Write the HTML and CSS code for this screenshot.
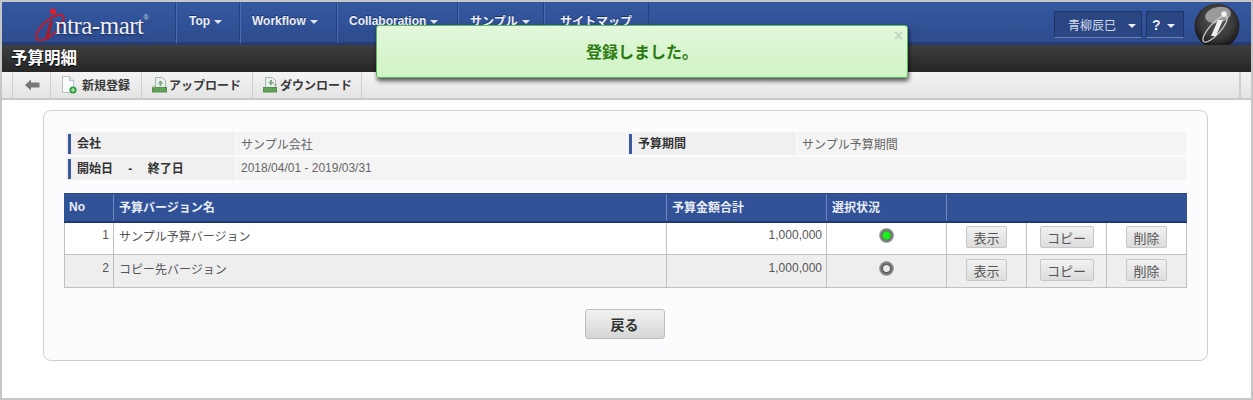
FILE: index.html
```html
<!DOCTYPE html>
<html lang="ja">
<head>
<meta charset="utf-8">
<title>予算明細</title>
<link rel="stylesheet" href="styles.css">
</head>
<body>
<div class="frame">
  <header class="topbar">
    <div class="logo">
      <svg class="logo-mark" width="34" height="36" viewBox="0 0 34 36">
        <ellipse cx="17" cy="21.500" rx="7" ry="17.500" transform="rotate(48 17 21.500)" fill="none" stroke="#b81e2c" stroke-width="2"/>
        <path d="M18.500 15 L14 31 Q13.500 33 16 31.500" fill="none" stroke="#a81c28" stroke-width="3"/>
        <circle cx="20" cy="5.500" r="3" fill="#e3202e"/>
      </svg>
      <span class="logo-text">ntra-mart</span><span class="logo-reg">®</span>
    </div>
    <nav class="nav">
      <a class="nav-item nav-top">Top <i class="caret"></i></a>
      <a class="nav-item nav-wf">Workflow <i class="caret"></i></a>
      <a class="nav-item nav-co">Collaboration <i class="caret"></i></a>
      <a class="nav-item nav-sa">サンプル <i class="caret"></i></a>
      <a class="nav-item nav-si">サイトマップ</a>
    </nav>
    <div class="user">
      <a class="user-btn user-name">青柳辰巳 <i class="caret caret-light"></i></a>
      <a class="user-btn user-help"><b>?</b> <i class="caret caret-light"></i></a>
      <svg class="orb" width="46" height="46" viewBox="0 0 46 46">
        <defs>
          <radialGradient id="orbg" cx="50%" cy="40%" r="62%">
            <stop offset="0" stop-color="#555"/>
            <stop offset="0.6" stop-color="#3a3a3a"/>
            <stop offset="1" stop-color="#0e0e12"/>
          </radialGradient>
        </defs>
        <circle cx="23" cy="23" r="22.500" fill="url(#orbg)"/>
        <ellipse cx="24" cy="12" rx="13" ry="8" transform="rotate(-12 24 12)" fill="#9a9a9a"/>
        <ellipse cx="21" cy="26" rx="5.500" ry="17" transform="rotate(42 21 26)" fill="none" stroke="#cfcfcf" stroke-width="1.300"/>
        <path d="M24 17 L29 17 L22 33 L17 33 Z" fill="#f0f0f0"/>
        <circle cx="30" cy="11" r="2.800" fill="#f0f0f0"/>
      </svg>
    </div>
  </header>
  <div class="titlebar"><h1 class="title">予算明細</h1></div>
  <div class="toolbar">
    <a class="tool tool-back">
      <svg width="15" height="12" viewBox="0 0 15 12"><path d="M0 6 L6 0.500 V3.500 H14.500 V8.500 H6 V11.500 Z" fill="#777"/></svg>
    </a>
    <a class="tool tool-new">
      <svg width="16" height="18" viewBox="0 0 16 18"><path d="M1.500 .5H8.500L12.500 4.500V16.500H1.500Z" fill="#fafcfc" stroke="#b4c0c4"/><path d="M8.500 .5V4.500H12.500" fill="#dde6e8" stroke="#b4c0c4"/><circle cx="12" cy="14" r="3.600" fill="#2f9e3f"/><path d="M12 12V16M10 14H14" stroke="#d8f5d8"/></svg>
      <span class="tool-label tool-label-gap">新規登録</span>
    </a>
    <a class="tool tool-up">
      <svg width="16" height="16" viewBox="0 0 16 16"><path d="M3.500 .5H10.500L13.500 3.500V12H3.500Z" fill="#e8efec" stroke="#a8b4b0"/><path d="M5.500 6.500L8.500 3.500L11.500 6.500H9.500V9H7.500V6.500Z" fill="#7fa98a"/><rect x="0.500" y="10.500" width="14" height="4.500" fill="#5da552" stroke="#5a8a50"/><rect x="0.500" y="8.500" width="2.500" height="2" fill="#b8c8b8"/></svg>
      <span class="tool-label">アップロード</span>
    </a>
    <a class="tool tool-down">
      <svg width="16" height="16" viewBox="0 0 16 16"><path d="M2.500 .5H9.500L12.500 3.500V12H2.500Z" fill="#e8efec" stroke="#a8b4b0"/><path d="M5 5H7V3H9V5H11L8 8.500Z" fill="#7fa98a"/><rect x="0.500" y="10.500" width="13" height="4.500" fill="#5da552" stroke="#5a8a50"/><path d="M11 7L14 7L12.500 9Z" fill="#9a9a9a"/></svg>
      <span class="tool-label">ダウンロード</span>
    </a>
    <span class="tool-end"></span>
  </div>
  <main class="content">
    <section class="card">
      <table class="info">
        <colgroup><col class="i1"><col class="i2"><col class="i3"><col></colgroup>
        <tr>
          <th><span class="info-label">会社</span></th>
          <td>サンプル会社</td>
          <th><span class="info-label">予算期間</span></th>
          <td>サンプル予算期間</td>
        </tr>
        <tr>
          <th><span class="info-label">開始日　&nbsp;-　&nbsp;終了日</span></th>
          <td colspan="3">2018/04/01 - 2019/03/31</td>
        </tr>
      </table>
      <table class="data">
        <colgroup><col class="c1"><col class="c2"><col class="c3"><col class="c4"><col class="c5"><col class="c6"><col></colgroup>
        <thead>
          <tr>
            <th>No</th>
            <th>予算バージョン名</th>
            <th>予算金額合計</th>
            <th>選択状況</th>
            <th colspan="3"></th>
          </tr>
        </thead>
        <tbody>
          <tr>
            <td class="num">1</td>
            <td>サンプル予算バージョン</td>
            <td class="num">1,000,000</td>
            <td class="ctr"><span class="radio radio-on"></span></td>
            <td class="ctr"><button class="mini">表示</button></td>
            <td class="ctr"><button class="mini">コピー</button></td>
            <td class="ctr"><button class="mini">削除</button></td>
          </tr>
          <tr class="alt">
            <td class="num">2</td>
            <td>コピー先バージョン</td>
            <td class="num">1,000,000</td>
            <td class="ctr"><span class="radio"></span></td>
            <td class="ctr"><button class="mini">表示</button></td>
            <td class="ctr"><button class="mini">コピー</button></td>
            <td class="ctr"><button class="mini">削除</button></td>
          </tr>
        </tbody>
      </table>
      <div class="actions"><button class="back-btn">戻る</button></div>
    </section>
  </main>
  <div class="toast">
    <span class="toast-close">×</span>
    <p class="toast-text">登録しました。</p>
  </div>
</div>
</body>
</html>
```
FILE: styles.css
```css
* { box-sizing: border-box; }
html, body { margin: 0; padding: 0; }
body {
  font-family: "Liberation Sans", "Noto Sans CJK JP", sans-serif;
  font-size: 12px;
  color: #555;
  background: #fff;
}
.frame {
  position: relative;
  width: 1253px;
  height: 400px;
  border: 2px solid #c6c6c6;
  overflow: hidden;
  display: flex;
  flex-direction: column;
}
.topbar {
  height: 43px;
  flex: none;
  display: flex;
  align-items: stretch;
  background: linear-gradient(#34589f, #2e4c8f 93%, #263f78 93%, #233a6e);
}
.logo {
  width: 173px;
  flex: none;
  display: flex;
  align-items: center;
  padding-left: 31px;
}
.logo-mark { flex: none; margin-right: -12px; }
.logo-text {
  font-family: "Liberation Serif", serif;
  font-size: 25px;
  color: #eef0f6;
  letter-spacing: -0.5px;
  text-shadow: 0 1px 2px #16264f;
  margin-top: 5px;
}
.logo-reg { font-size: 7px; color: #cdd; align-self: flex-start; margin-top: 12px; }
.nav { display: flex; align-items: stretch; height: 41px; }
.nav-item {
  display: flex;
  align-items: center;
  gap: 4px;
  padding: 0 0 4px 12px;
  color: #eaeef8;
  font-weight: bold;
  font-size: 12px;
  border-left: 1px solid #24407e;
  box-shadow: inset 1px 0 0 #4a6cb0;
  text-shadow: 0 -1px 0 #1c2f60;
}
.nav-top { width: 64px; padding-left: 13px; }
.nav-wf { width: 97px; }
.nav-co { width: 121px; }
.nav-sa { width: 86px; }
.nav-si { width: 106px; padding-left: 16px; border-right: 1px solid #24407e; }
.caret {
  display: inline-block;
  width: 0;
  height: 0;
  margin-top: 3px;
  border-left: 4px solid transparent;
  border-right: 4px solid transparent;
  border-top: 4px solid #dfe4f0;
}
.caret-light { border-top-color: #eef; }
.user {
  margin-left: auto;
  display: flex;
  align-items: flex-start;
  gap: 4px;
  padding: 9px 11px 0 0;
}
.user-btn {
  display: flex;
  align-items: center;
  height: 27px;
  background: #2a4683;
  border: 1px solid #1e3468;
  border-bottom: 1px solid #6d86ba;
  color: #d4dcec;
  font-size: 12px;
}
.user-name { width: 88px; padding-left: 13px; gap: 12px; }
.user-help { width: 38px; padding-left: 5px; gap: 6px; }
.user-help b { color: #eef; font-size: 14px; }
.orb { margin: -8px 0 0 6px; flex: none; }
.titlebar {
  height: 27px;
  flex: none;
  display: flex;
  align-items: center;
  padding: 0 0 4px 9px;
  background: linear-gradient(#3e3e3e, #262626);
}
.title {
  margin: 0;
  color: #fff;
  font-size: 16.500px;
  font-weight: bold;
  text-shadow: 0 1px 1px #000;
}
.toolbar {
  height: 28px;
  flex: none;
  display: flex;
  align-items: stretch;
  padding: 0 10px 0 10px;
  background: linear-gradient(#f4f4f4, #e4e4e4);
  border-bottom: 2px solid #c8c8c8;
}
.tool {
  display: flex;
  align-items: center;
  padding: 0 0 1px 10px;
  color: #3a3a3a;
  font-size: 12px;
  font-weight: bold;
  border-left: 1px solid #cfcfcf;
}
.tool-back { width: 38px; padding-left: 12px; }
.tool-new { width: 91px; }
.tool-up { width: 111px; }
.tool-down { width: 110px; border-right: 1px solid #cfcfcf; }
.tool-label { margin-left: 1px; }
.tool-label-gap { margin-left: 5px; }
.tool-end { margin-left: auto; width: 2px; border-left: 1px solid #cfcfcf; border-right: 1px solid #cfcfcf; }
.content {
  flex: 1;
  padding: 10px 43px 0 41px;
}
.card {
  height: 251px;
  background: #fcfcff;
  border: 1px solid #cfcfcf;
  border-radius: 8px;
  padding: 19px 20px 0;
}
.info {
  width: 1122px;
  margin-left: 1px;
  border-collapse: separate;
  border-spacing: 1px 2px;
  table-layout: fixed;
  font-size: 12px;
}
.i1 { width: 169px; }
.i2 { width: 390px; }
.i3 { width: 169px; }
.info th, .info td { height: 23px; padding: 0 0 1px; background: #f4f4f4; text-align: left; font-weight: normal; }
.info th { background: #f0f0f0; padding: 0 0 0 2px; }
.info td { padding-left: 5px; color: #666; }
.info-label {
  display: block;
  border-left: 3px solid #3a5aa0;
  padding: 0 0 0 6px;
  line-height: 20px;
  color: #333;
  font-weight: bold;
  font-size: 12px;
}
.data {
  width: 1123px;
  margin-top: 11px;
  border-collapse: collapse;
  table-layout: fixed;
  font-size: 12px;
}
.c1 { width: 49px; }
.c2 { width: 553px; }
.c3 { width: 160px; }
.c4 { width: 120px; }
.c5 { width: 80px; }
.c6 { width: 80px; }
.data th {
  height: 28px;
  padding: 0 5px 1px;
  background: #325298;
  color: #e8edf7;
  text-align: left;
  font-size: 12px;
  border-left: 1px solid #6e88bb;
  border-top: 1px solid #2a4683;
  border-bottom: 2px solid #223a72;
}
.data th:first-child { border-left-color: #325298; padding-left: 4px; }
.data td {
  height: 33px;
  padding: 0 4px 6px 5px;
  border: 1px solid #c0c0c0;
  background: #fff;
  color: #555;
}
.data .alt td { background: #eee; }
.data td.num { text-align: right; }
.data td.ctr { text-align: center; padding: 0; }
.radio {
  display: inline-block;
  width: 15px;
  height: 15px;
  margin-bottom: 6px;
  vertical-align: middle;
  border-radius: 50%;
  background: radial-gradient(circle, #e8e8e8 0 3px, #5c5c5c 4px, #808080 6px, #b4b4b4 7.500px);
}
.radio-on { background: radial-gradient(circle, #1cf01c 0 3.500px, #5c7c5c 4.500px, #808080 6px, #b4b4b4 7.500px); }
.mini {
  width: 41px;
  height: 22px;
  margin-bottom: 2px;
  padding: 0;
  font-family: inherit;
  font-size: 13px;
  color: #555;
  background: linear-gradient(#f2f2f2, #dcdcdc);
  border: 1px solid #c6c6c6;
  border-radius: 2px;
  vertical-align: middle;
}
.ctr:nth-child(6) .mini { width: 54px; }
.actions { display: flex; justify-content: center; margin-top: 21px; padding-right: 2px; }
.back-btn {
  width: 80px;
  height: 30px;
  padding: 0;
  font-family: inherit;
  font-weight: bold;
  font-size: 14px;
  color: #333;
  background: linear-gradient(#f2f2f2, #d6d6d6);
  border: 1px solid #bdbdbd;
  border-radius: 3px;
}
.toast {
  position: absolute;
  left: 374px;
  top: 23px;
  width: 532px;
  height: 53px;
  padding-bottom: 1px;
  background: linear-gradient(#e2f8dc, #d0f3c4);
  border: 1px solid #5cb85c;
  border-radius: 3px;
  box-shadow: 1px 3px 4px rgba(0, 0, 0, 0.65);
  display: flex;
  align-items: center;
  justify-content: center;
}
.toast-text {
  margin: 0;
  color: #2c7a10;
  font-size: 16px;
  font-weight: bold;
}
.toast-close {
  position: absolute;
  right: 4px;
  top: 1px;
  color: #c4d4c0;
  font-size: 16px;
  font-weight: bold;
}
```
